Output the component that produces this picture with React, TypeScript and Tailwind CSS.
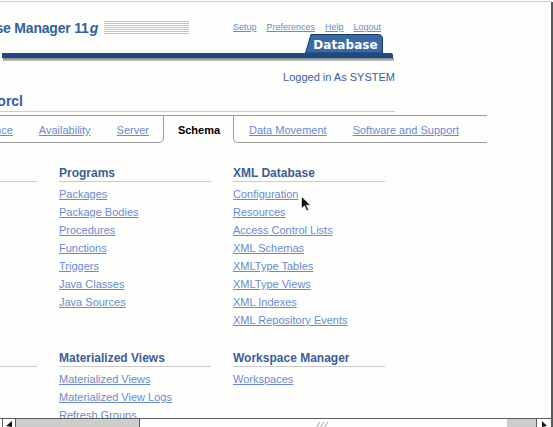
import React from 'react';

const linkCls = 'text-[#6a8bd0] underline decoration-[#6a8bd0]';

type Col = { title: string; items: string[] };

const sectionOne: Col[] = [
  {
    title: 'Database Objects',
    items: ['Tables', 'Indexes', 'Views', 'Synonyms', 'Sequences', 'Database Links', 'Directory Objects'],
  },
  {
    title: 'Programs',
    items: ['Packages', 'Package Bodies', 'Procedures', 'Functions', 'Triggers', 'Java Classes', 'Java Sources'],
  },
  {
    title: 'XML Database',
    items: [
      'Configuration',
      'Resources',
      'Access Control Lists',
      'XML Schemas',
      'XMLType Tables',
      'XMLType Views',
      'XML Indexes',
      'XML Repository Events',
    ],
  },
];

const sectionTwo: Col[] = [
  { title: 'Users & Privileges', items: ['Users', 'Roles', 'Profiles', 'Audit Settings'] },
  {
    title: 'Materialized Views',
    items: ['Materialized Views', 'Materialized View Logs', 'Refresh Groups', 'Dimensions'],
  },
  { title: 'Workspace Manager', items: ['Workspaces'] },
];

function Column({ col }: { col: Col }) {
  return (
    <div className="w-[152px] shrink-0 overflow-hidden">
      <div className="whitespace-nowrap border-b border-[#cbcbcb] pb-[1px] text-[12px] font-bold leading-[14px] text-[#3b5f95]">
        {col.title}
      </div>
      <ul className="mt-[3px]">
        {col.items.map((it) => (
          <li key={it} className="whitespace-nowrap text-[11px] leading-[18px]">
            <a className={linkCls}>{it}</a>
          </li>
        ))}
      </ul>
    </div>
  );
}

function TabLink({ label }: { label: string }) {
  return (
    <div className="whitespace-nowrap px-[13px] pt-[2px] text-[11px] leading-[24px]">
      <a className={linkCls}>{label}</a>
    </div>
  );
}

function DatabaseTab() {
  return (
    <div className="relative h-[19px] w-[78px]">
      <svg className="absolute inset-0" width="78" height="19" viewBox="0 0 78 19">
        <path
          d="M0.5 19 L6 0.5 L73 0.5 Q77.5 0.5 77.5 5 L77.5 19 Z"
          fill="#3a6aa3"
          stroke="#1a3d6c"
          strokeWidth="1"
        />
      </svg>
      <div className="relative flex h-full items-center justify-center pl-[3px] pt-[2px] font-['DejaVu_Sans',sans-serif] text-[12px] font-bold tracking-[0.1px] text-white">
        Database
      </div>
    </div>
  );
}

function Cursor() {
  return (
    <svg className="absolute left-[301px] top-[196px]" width="11" height="16" viewBox="0 0 11 16">
      <path d="M0.5 0.5 L0.5 12.5 L3.5 9.8 L5.8 14.8 L7.6 14 L5.4 9.2 L9.5 9.2 Z" fill="#111" stroke="#fff" strokeWidth="0.6" />
    </svg>
  );
}

export default function App() {
  return (
    <div className="relative h-[427px] w-[553px] overflow-hidden bg-[#fdfefc] font-['Liberation_Sans',Arial,sans-serif]">
      <div className="flex h-[418px]">
        <div className="h-full w-[551px] overflow-hidden">
          <div className="h-[1px]" />
          <div className="h-[1px] bg-[#cfcfcf]" />

          {/* branding row */}
          <div className="flex h-[32px] w-[395px] items-start">
            <div className="mt-[18px] flex w-[99px] justify-end overflow-hidden whitespace-nowrap text-[14px] font-bold leading-[16px] tracking-[-0.2px] text-[#31609a]">
              Oracle Enterprise Manager 11<i className="ml-[1px] pr-[1px]">g</i>
            </div>
            <div className="ml-[5px] mt-[19px] h-[13px] w-[85px] bg-[repeating-linear-gradient(to_bottom,#c8c8a0_0px,#c8c8a0_1px,transparent_1px,transparent_2px)]" />
            <div className="ml-[44px] mt-[20px] flex gap-[10px] text-[9px] leading-[11px]">
              <a className={linkCls}>Setup</a>
              <a className={linkCls}>Preferences</a>
              <a className={linkCls}>Help</a>
              <a className={linkCls}>Logout</a>
            </div>
          </div>

          <div className="flex h-[19px] w-[395px] justify-end pr-[12px]">
            <DatabaseTab />
          </div>
          <div className="ml-[2px] h-[5px] w-[391px] rounded-tr-[2px] bg-[#1e4a83]" />
          <div className="ml-[3px] h-[3px] w-[391px] bg-[linear-gradient(to_bottom,#808080,#c9c9c9)]" />

          <div className="mt-[10px] w-[395px] text-right text-[11px] leading-[13px] text-[#3a5f9a]">
            Logged in As SYSTEM
          </div>

          <div className="mt-[9px] w-[395px] border-b border-[#cccccc] pb-[2px]">
            <div className="flex w-[23px] justify-end overflow-hidden whitespace-nowrap text-[14px] font-bold leading-[16px] text-[#31609a]">
              Database Instance: orcl
            </div>
          </div>

          {/* sub tabs */}
          <div className="mt-[3px] flex h-[28px] w-[487px]">
            <div className="flex w-[164px] shrink-0 justify-end overflow-hidden rounded-br-[5px] border-b border-r border-t border-[#9c9c9c] pr-[1px]">
              <TabLink label="Performance" />
              <TabLink label="Availability" />
              <TabLink label="Server" />
            </div>
            <div className="flex w-[69px] shrink-0 justify-center border-t border-[#9c9c9c] pl-[1px] pt-[2px] text-[11px] font-bold leading-[24px] text-black">
              Schema
            </div>
            <div className="flex w-[254px] shrink-0 rounded-bl-[5px] border-b border-l border-t border-[#9c9c9c] pl-[2px]">
              <TabLink label="Data Movement" />
              <TabLink label="Software and Support" />
            </div>
          </div>

          <div className="mt-[23px] -ml-[115px] flex gap-[22px]">
            {sectionOne.map((c) => (
              <Column key={c.title} col={c} />
            ))}
          </div>
          <div className="mt-[22px] -ml-[115px] flex gap-[22px]">
            {sectionTwo.map((c) => (
              <Column key={c.title} col={c} />
            ))}
          </div>
        </div>
        <div className="mt-[2px] w-[2px] bg-[#5b5b5b]" />
      </div>

      {/* horizontal scrollbar */}
      <div className="flex h-[9px] border-t border-[#5b5b5b]">
        <div className="ml-[2px] w-[14px] border-x border-[#5b5b5b]">
          <svg width="12" height="8" viewBox="0 0 12 8">
            <path d="M3 7 L9 2 L9 8 Z" fill="#111" />
          </svg>
        </div>
        <div className="w-[124px] border-r border-[#5b5b5b] bg-[#cdcdcb]" />
        <div className="relative flex-1">
          <svg className="absolute left-[175px] top-[1px]" width="16" height="8" viewBox="0 0 16 8">
            <path d="M1 8 L5 2 M5 8 L9 2 M9 8 L13 2" stroke="#8a8a8a" strokeWidth="0.8" />
          </svg>
        </div>
        <div className="w-[29px] bg-[#cdcdcb]" />
        <div className="w-[15px] border-l border-[#5b5b5b]">
          <svg width="14" height="8" viewBox="0 0 14 8">
            <path d="M10 7 L5 2 L5 8 Z" fill="#111" />
          </svg>
        </div>
        <div className="w-[2px] bg-[#5b5b5b]" />
      </div>

      <Cursor />
    </div>
  );
}
